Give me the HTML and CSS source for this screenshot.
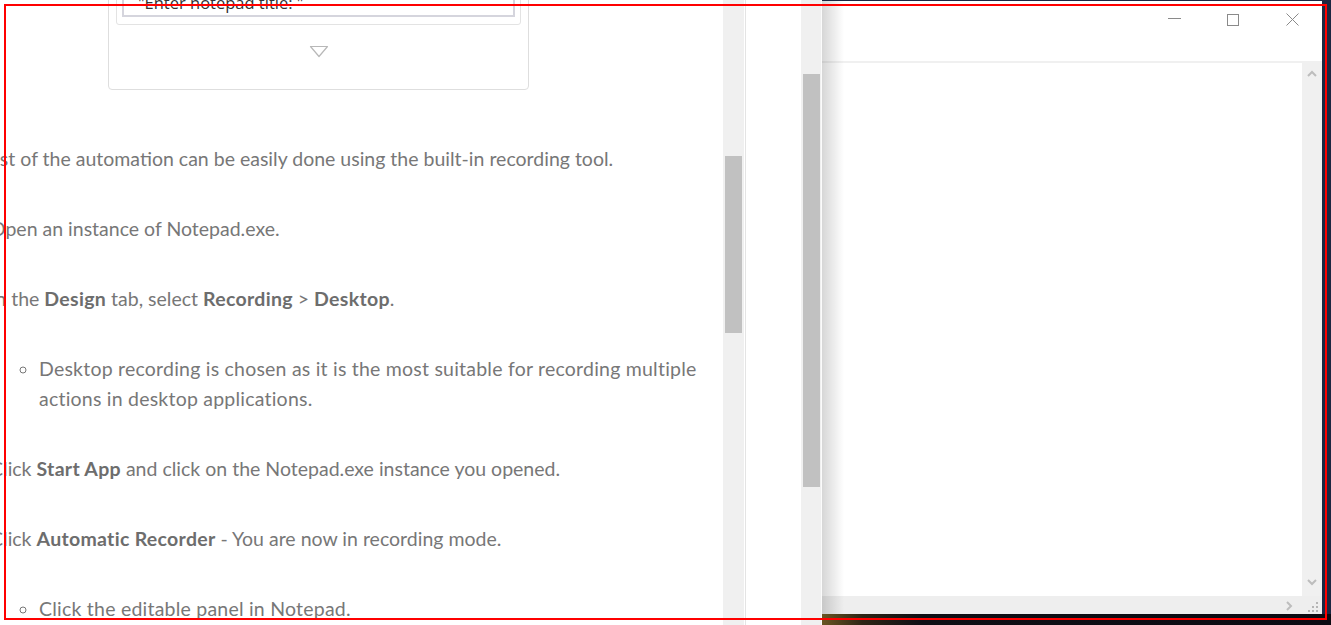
FILE: index.html
```
<!DOCTYPE html>
<html lang="en">
<head>
<meta charset="utf-8">
<title>Recording tutorial</title>
<link rel="stylesheet" href="styles.css">
</head>
<body>
<div class="screen">
  <section class="docpane">
    <div class="doc-view">
      <article class="doc">
        <div class="figure">
          <div class="fig-field">
            <div class="fig-input">"Enter notepad title: "</div>
          </div>
          <div class="fig-arrow">
            <svg width="20" height="13" viewBox="0 0 20 13"><path d="M1.5 1.5 H18.5 L10 11.5 Z" fill="none" stroke="#b8b8b8" stroke-width="1.2" stroke-linejoin="round"/></svg>
          </div>
        </div>
        <p class="lead">Most of the automation can be easily done using the built-in recording tool.</p>
        <ol class="steps">
          <li><p>Open an instance of Notepad.exe.</p></li>
          <li><p>In the <b>Design</b> tab, select <b>Recording</b> &gt; <b>Desktop</b>.</p>
            <ul class="sub">
              <li><p>Desktop recording is chosen as it is the most suitable for recording multiple actions in desktop applications.</p></li>
            </ul>
          </li>
          <li><p>Click <b>Start App</b> and click on the Notepad.exe instance you opened.</p></li>
          <li><p>Click <b>Automatic Recorder</b> - You are now in recording mode.</p>
            <ul class="sub">
              <li><p>Click the editable panel in Notepad.</p></li>
            </ul>
          </li>
        </ol>
      </article>
    </div>
    <div class="vtrack"><div class="thumb"></div></div>
  </section>
  <section class="midpane">
    <div class="vtrack"><div class="thumb"></div></div>
  </section>
  <section class="desktop">
    <div class="desk-row">
      <div class="notepad">
        <div class="np-title">
          <div class="np-btn">
            <svg width="13" height="12" viewBox="0 0 13 12"><path d="M0 4.5 H13" stroke="#8a8a8a" stroke-width="1"/></svg>
          </div>
          <div class="np-btn">
            <svg width="13" height="12" viewBox="0 0 13 12"><rect x="0.5" y="0.5" width="11" height="11" fill="none" stroke="#8a8a8a" stroke-width="1"/></svg>
          </div>
          <div class="np-btn">
            <svg width="13" height="13" viewBox="0 0 13 13"><path d="M0.5 0.5 L12.5 12.5 M12.5 0.5 L0.5 12.5" stroke="#8a8a8a" stroke-width="1"/></svg>
          </div>
        </div>
        <div class="np-main">
          <div class="np-edit"></div>
          <div class="np-vscroll">
            <svg width="10" height="7" viewBox="0 0 10 7"><path d="M1 6 L5 2 L9 6" fill="none" stroke="#bdbdbd" stroke-width="2"/></svg>
            <svg width="10" height="7" viewBox="0 0 10 7"><path d="M1 1 L5 5 L9 1" fill="none" stroke="#bdbdbd" stroke-width="2"/></svg>
          </div>
        </div>
        <div class="np-hbar">
          <div class="np-hscroll">
            <svg width="7" height="10" viewBox="0 0 7 10"><path d="M1 1 L5 5 L1 9" fill="none" stroke="#bdbdbd" stroke-width="2"/></svg>
          </div>
          <div class="np-corner">
            <svg width="10" height="10" viewBox="0 0 10 10" fill="#b5b5b5">
              <rect x="8" y="0" width="2" height="2"/>
              <rect x="4" y="4" width="2" height="2"/><rect x="8" y="4" width="2" height="2"/>
              <rect x="0" y="8" width="2" height="2"/><rect x="4" y="8" width="2" height="2"/><rect x="8" y="8" width="2" height="2"/>
            </svg>
          </div>
        </div>
        <div class="np-shade"></div>
      </div>
      <div class="desk-edge"></div>
    </div>
    <div class="desk-bottom"></div>
  </section>
</div>
<div class="capture-frame"></div>
</body>
</html>
```
FILE: styles.css
```
* { box-sizing: border-box; }
html, body { margin: 0; padding: 0; overflow: hidden; }
body {
  width: 1331px;
  height: 625px;
  position: relative;
  background: #fff;
  font-family: Lato, "Open Sans", sans-serif;
}
.screen { display: flex; height: 625px; }

/* documentation pane */
.docpane {
  width: 746px;
  flex: none;
  display: flex;
  border-right: 1px solid #e4e4e4;
}
.doc-view { width: 723px; flex: none; overflow: hidden; }
.doc {
  margin: -33px 0 0 -29px;
  padding-right: 16px;
  color: #777;
  font-size: 19.5px;
  line-height: 30px;
}
.doc p { margin: 0 0 40px; }
.doc b { font-weight: 700; color: #6d6d6d; letter-spacing: 0.3px; }
.steps { margin: 0; padding-left: 19px; }
.sub { margin: 0; padding-left: 49px; list-style: circle; }
.sub p { letter-spacing: 0.22px; }

.figure {
  margin: 0 0 54px 137px;
  width: 421px;
  border: 1px solid #dedede;
  border-radius: 4px;
  padding: 6px 7px 32px;
}
.fig-field {
  border: 1px solid #e3e3e3;
  border-radius: 3px;
  padding: 6px 5px 7px;
}
.fig-input {
  height: 36px;
  border: 2px solid #d5d5dd;
  padding: 8px 14px 0;
  font-family: "Open Sans", "Liberation Sans", sans-serif;
  font-size: 16.5px;
  line-height: 24px;
  color: #333;
}
.fig-arrow {
  margin-top: 20px;
  display: flex;
  justify-content: center;
  height: 12px;
}
.fig-arrow svg { display: block; margin-left: 1px; }

/* scrollbars */
.vtrack { background: #f0f0f0; flex: none; }
.thumb { background: #c1c1c1; width: 17px; margin-left: 2px; }
.docpane .vtrack { width: 21px; margin-right: 1px; }
.docpane .thumb { margin-top: 156px; height: 177px; }
.midpane {
  width: 76px;
  flex: none;
  display: flex;
  justify-content: flex-end;
  border-right: 1px solid #fbfbfb;
}
.midpane .vtrack { width: 20px; }
.midpane .thumb { margin-top: 74px; height: 413px; }

/* desktop + notepad */
.desktop {
  width: 509px;
  flex: none;
  display: flex;
  flex-direction: column;
}
.desk-row {
  height: 614px;
  display: flex;
  background: #1b2742;
  padding-top: 1px;
}
.notepad {
  width: 500px;
  height: 613px;
  background: #fff;
  display: flex;
  flex-direction: column;
  position: relative;
}
.desk-edge { flex: 1; }
.desk-bottom {
  flex: 1;
  background: linear-gradient(to right, #6a5522 0, #2e2515 40px, #0e0e14 100px, #0b0b12 100%);
}
.np-title {
  height: 62px;
  flex: none;
  border-bottom: 2px solid #f0f0f0;
  display: flex;
  justify-content: flex-end;
  align-items: flex-start;
}
.np-btn {
  width: 59px;
  height: 37px;
  display: flex;
  align-items: center;
  justify-content: center;
}
.np-btn svg { display: block; }
.np-main { flex: 1; display: flex; }
.np-edit { flex: 1; background: #fff; border-radius: 0 0 3px 0; }
.np-vscroll {
  width: 20px;
  background: #f0f0f0;
  display: flex;
  flex-direction: column;
  justify-content: space-between;
  align-items: center;
  padding: 7px 0 10px;
}
.np-vscroll svg { display: block; }
.np-hbar { height: 18px; flex: none; display: flex; background: #eeeeee; }
.np-hscroll {
  flex: 1;
  display: flex;
  align-items: center;
  justify-content: flex-end;
  padding: 1px 9px 0 0;
}
.np-corner {
  width: 20px;
  display: flex;
  align-items: flex-end;
  justify-content: flex-start;
  padding: 0 0 2px 6px;
}
.np-hscroll svg, .np-corner svg { display: block; }
.np-shade {
  position: absolute;
  left: 0;
  top: 0;
  bottom: 0;
  width: 22px;
  background: linear-gradient(to right, rgba(0,0,0,0.16), rgba(0,0,0,0));
  pointer-events: none;
}

.capture-frame {
  position: absolute;
  left: 4px;
  top: 4px;
  width: 1323px;
  height: 616px;
  border: 2px solid #ff0000;
  pointer-events: none;
}
```
